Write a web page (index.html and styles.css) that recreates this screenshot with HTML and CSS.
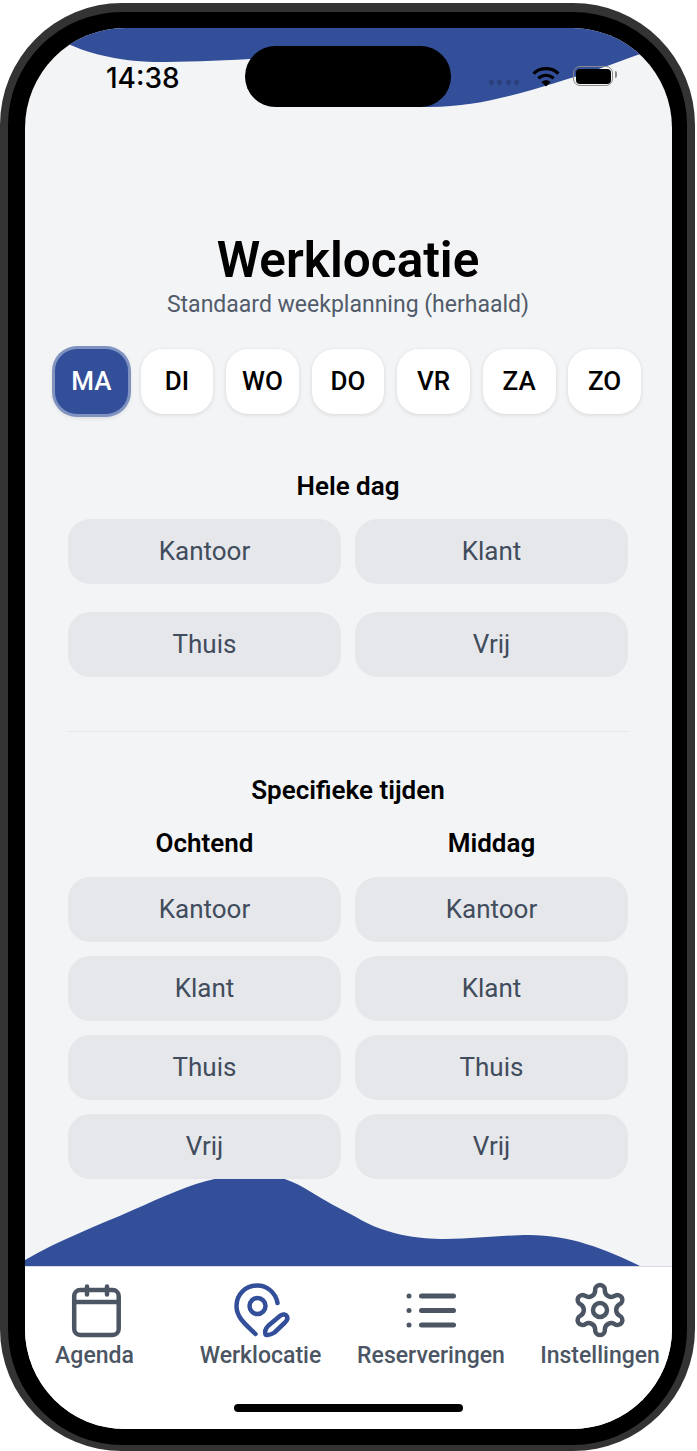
FILE: index.html
```html
<!DOCTYPE html>
<html>

<head>
	<meta name="viewport" content="width=device-width, initial-scale=1" />
	<link rel="stylesheet" href="styles.css">
</head>

<body>
	<div class="device">
		<div class="screen">
			<svg class="topWave" width="647" height="90" viewBox="0 0 647 90">
				<path fill="#334f99" d="M0 0H647V0L618 25C585 37 560 46 530 55C490 67 450 79 405 79C340 79 280 48 225 31C190 33 160 34 130 34C90 33 60 24 41 15L20 0Z" />
			</svg>
			<div class="island"></div>

			<div class="statusBar">
				<span class="clock">14:38</span>
				<div class="statusIcons">
					<div class="signal"><i></i><i></i><i></i><i></i></div>
					<svg class="wifi" width="28" height="21" viewBox="0 0 28 21">
						<path fill="none" stroke="#000" stroke-width="3.2" d="M1.6 7.6C8.4 1 19.6 1 26.4 7.6" />
						<path fill="none" stroke="#000" stroke-width="3.2" d="M6.4 12.4C10.6 8.2 17.4 8.2 21.6 12.4" />
						<path d="M14 20.6L9.4 16C12 13.6 16 13.6 18.6 16Z" />
					</svg>
					<div class="battery"><div class="batteryFill"></div></div>
				</div>
			</div>

			<div class="content">
				<h1 class="pageTitle">Werklocatie</h1>
				<p class="pageSub">Standaard weekplanning (herhaald)</p>

				<div class="days">
					<button class="day dayActive">MA</button>
					<button class="day">DI</button>
					<button class="day">WO</button>
					<button class="day">DO</button>
					<button class="day">VR</button>
					<button class="day">ZA</button>
					<button class="day">ZO</button>
				</div>

				<h2 class="sectionTitle">Hele dag</h2>
				<div class="wholeDay">
					<button class="choice">Kantoor</button>
					<button class="choice">Klant</button>
					<button class="choice">Thuis</button>
					<button class="choice">Vrij</button>
				</div>

				<div class="divider"></div>

				<h2 class="sectionTitle specific">Specifieke tijden</h2>
				<div class="dayParts">
					<div class="dayPart">
						<h3 class="partTitle">Ochtend</h3>
						<button class="choice">Kantoor</button>
						<button class="choice">Klant</button>
						<button class="choice">Thuis</button>
						<button class="choice">Vrij</button>
					</div>
					<div class="dayPart">
						<h3 class="partTitle">Middag</h3>
						<button class="choice">Kantoor</button>
						<button class="choice">Klant</button>
						<button class="choice">Thuis</button>
						<button class="choice">Vrij</button>
					</div>
				</div>
			</div>

			<svg class="bottomWave" width="647" height="87" viewBox="0 0 647 87">
				<path fill="#334f99" d="M0 81C36 60 72 47 108 31C140 17 170 3 195 -1H257C268 3 277 7 286 13C300 22 316 30 331 38C345 47 365 54 383 57C395 59 405 60 420 60C450 60 480 56 504 56C545 56 580 70 615 87H0Z" />
			</svg>

			<div class="tabBar">
				<div class="tabs">
					<div class="tab">
						<svg width="54" height="56" viewBox="0 0 54 56" fill="none" stroke="#4b5563" stroke-width="4.5" stroke-linecap="round" stroke-linejoin="round">
							<rect x="6.200" y="7" width="44.500" height="45" rx="6" />
							<path d="M6.200 19H50.700M19 3.500V11.500M39 3.500V11.500" />
						</svg>
						<span>Agenda</span>
					</div>
					<div class="tab">
						<svg width="56" height="56" viewBox="0 0 56 56" fill="none" stroke="#334f99" stroke-width="4.5" stroke-linecap="round" stroke-linejoin="round">
							<circle cx="24.500" cy="23" r="8" />
							<path d="M44.500 20C42.500 9 33.500 2.500 24.500 2.500C12.500 2.500 3.500 11.500 3.500 23C3.500 35 13.500 42 22.500 51" />
							<path d="M32.500 51.500C31.500 48.500 32.500 45.500 35.500 42.500L47.500 32.500C50 30.500 53 31.500 54 33.500C55 35.500 54 37.500 52 39.500L41.500 49.500C38.500 51.500 35.500 52.500 32.500 51.500Z" />
						</svg>
						<span>Werklocatie</span>
					</div>
					<div class="tab">
						<svg width="54" height="56" viewBox="0 0 54 56" fill="none" stroke="#4b5563" stroke-width="5" stroke-linecap="round">
							<path d="M17.500 13H49.500M17.500 27.500H49.500M17.500 42H49.500" />
							<circle cx="5" cy="13" r="2.500" fill="#4b5563" stroke="none" />
							<circle cx="5" cy="27.500" r="2.500" fill="#4b5563" stroke="none" />
							<circle cx="5" cy="42" r="2.500" fill="#4b5563" stroke="none" />
						</svg>
						<span>Reserveringen</span>
					</div>
					<div class="tab">
						<svg width="54" height="56" viewBox="0 0 54 56" fill="none" stroke="#4b5563" stroke-width="4.5" stroke-linejoin="round">
							<circle cx="27" cy="27" r="7" />
							<path d="M22.160 7.590A4.900 4.900 0 1 1 31.840 7.590A6.500 6.500 0 0 0 41.390 13.110A4.900 4.900 0 1 1 46.230 21.490A6.500 6.500 0 0 0 46.230 32.510A4.900 4.900 0 1 1 41.390 40.890A6.500 6.500 0 0 0 31.840 46.410A4.900 4.900 0 1 1 22.160 46.410A6.500 6.500 0 0 0 12.610 40.890A4.900 4.900 0 1 1 7.770 32.510A6.500 6.500 0 0 0 7.770 21.490A4.900 4.900 0 1 1 12.610 13.110A6.500 6.500 0 0 0 22.160 7.590Z" />
						</svg>
						<span>Instellingen</span>
					</div>
				</div>
				<div class="homeBar"></div>
			</div>
		</div>
	</div>
</body>

</html>
```

FILE: styles.css
```css
* {
	box-sizing: border-box;
}

body {
	margin: 0;
	background-color: #ffffff;
	font-family: Roboto, "Liberation Sans", sans-serif;
}

.device {
	width: 695px;
	height: 1448px;
	margin-top: 3px;
	padding: 16px 15px 16px 17px;
	background-color: #000000;
	border-style: solid;
	border-color: #333333;
	border-width: 9px 8px 6px 8px;
	border-radius: 122px;
}

.screen {
	position: relative;
	display: flex;
	flex-direction: column;
	height: 100%;
	overflow: hidden;
	background-color: #f3f4f6;
	border-radius: 100px;
}

.topWave {
	position: absolute;
	top: 0;
	left: 0;
}

.island {
	position: absolute;
	top: 18px;
	left: 220px;
	width: 206px;
	height: 61px;
	background-color: #000000;
	border-radius: 31px;
}

.statusBar {
	position: relative;
	display: flex;
	justify-content: space-between;
	height: 72px;
	padding: 34px 59px 0 81px;
}

.clock {
	font-family: Inter, sans-serif;
	font-weight: 500;
	font-size: 28px;
	line-height: 32px;
	color: #000000;
}

.statusIcons {
	display: flex;
	align-items: center;
	height: 28px;
}

.signal {
	display: flex;
	gap: 3.500px;
	margin: 12px 13px 0 0;
}

.signal i {
	width: 5px;
	height: 5px;
	border-radius: 2px;
	background-color: #2b3f7d;
}

.battery {
	position: relative;
	width: 40px;
	height: 20px;
	margin-left: 13px;
	padding: 1.500px;
	border: 1.500px solid #8a8a8a;
	border-radius: 7px;
}

.battery::after {
	content: "";
	position: absolute;
	top: 4px;
	right: -4.500px;
	width: 2px;
	height: 7px;
	border-radius: 0 2px 2px 0;
	background-color: #8a8a8a;
}

.batteryFill {
	height: 100%;
	background-color: #000000;
	border-radius: 4px;
}

.content {
	position: relative;
	flex: 1;
	padding: 0 44px 0 43px;
}

.pageTitle {
	margin: 132px 0 0;
	font-size: 49.500px;
	line-height: 56px;
	font-weight: 600;
	text-align: center;
	color: #000000;
}

.pageSub {
	margin: 2px 0 0;
	font-size: 23px;
	line-height: 30px;
	text-align: center;
	color: #515b69;
}

.days {
	display: flex;
	gap: 12.700px;
	margin: 29px -13px 0;
}

.day {
	flex: 1;
	height: 65px;
	padding: 0 0 2px;
	border: 0;
	border-radius: 22px;
	background-color: #ffffff;
	box-shadow: 0 1px 4px rgba(0, 0, 0, 0.12);
	font-family: inherit;
	font-size: 26px;
	font-weight: 500;
	color: #000000;
}

.dayActive {
	background-color: #334f99;
	color: #ffffff;
	box-shadow: 0 0 0 3px #7f92c0, 0 2px 6px rgba(0, 0, 0, 0.2);
}

.sectionTitle {
	margin: 55px 0 16px;
	font-size: 26px;
	line-height: 34px;
	font-weight: 600;
	text-align: center;
	color: #000000;
}

.wholeDay {
	display: grid;
	grid-template-columns: 1fr 1fr;
	gap: 28px 14px;
}

.choice {
	display: block;
	width: 100%;
	height: 65px;
	padding: 0 0 2px;
	border: 0;
	border-radius: 22px;
	background-color: #e5e7eb;
	font-family: inherit;
	font-size: 26px;
	color: #414c5c;
}

.divider {
	height: 1px;
	margin-top: 54px;
	background-color: #e5e7eb;
}

.specific {
	margin: 41px 0 0;
}

.dayParts {
	display: grid;
	grid-template-columns: 1fr 1fr;
	column-gap: 14px;
}

.dayPart {
	display: flex;
	flex-direction: column;
	gap: 14px;
}

.partTitle {
	margin: 19px 0 3px;
	font-size: 26px;
	line-height: 34px;
	font-weight: 600;
	text-align: center;
	color: #000000;
}

.bottomWave {
	display: block;
	flex: none;
}

.tabBar {
	display: flex;
	flex-direction: column;
	flex: none;
	height: 163px;
	background-color: #ffffff;
	border-top: 1px solid #d9dce3;
}

.tabs {
	display: grid;
	grid-template-columns: 137px 121px 146px 118px;
	column-gap: 37px;
	padding: 16px 0 0 1px;
}

.tab {
	display: flex;
	flex-direction: column;
	align-items: center;
	font-size: 23px;
	font-weight: 500;
	line-height: 30px;
	white-space: nowrap;
	color: #4b5563;
}

.tab svg {
	overflow: visible;
}

.tab span {
	margin-top: 2px;
}

.homeBar {
	width: 229px;
	height: 8px;
	margin: 33px 0 0 209px;
	background-color: #000000;
	border-radius: 4px;
}
```
